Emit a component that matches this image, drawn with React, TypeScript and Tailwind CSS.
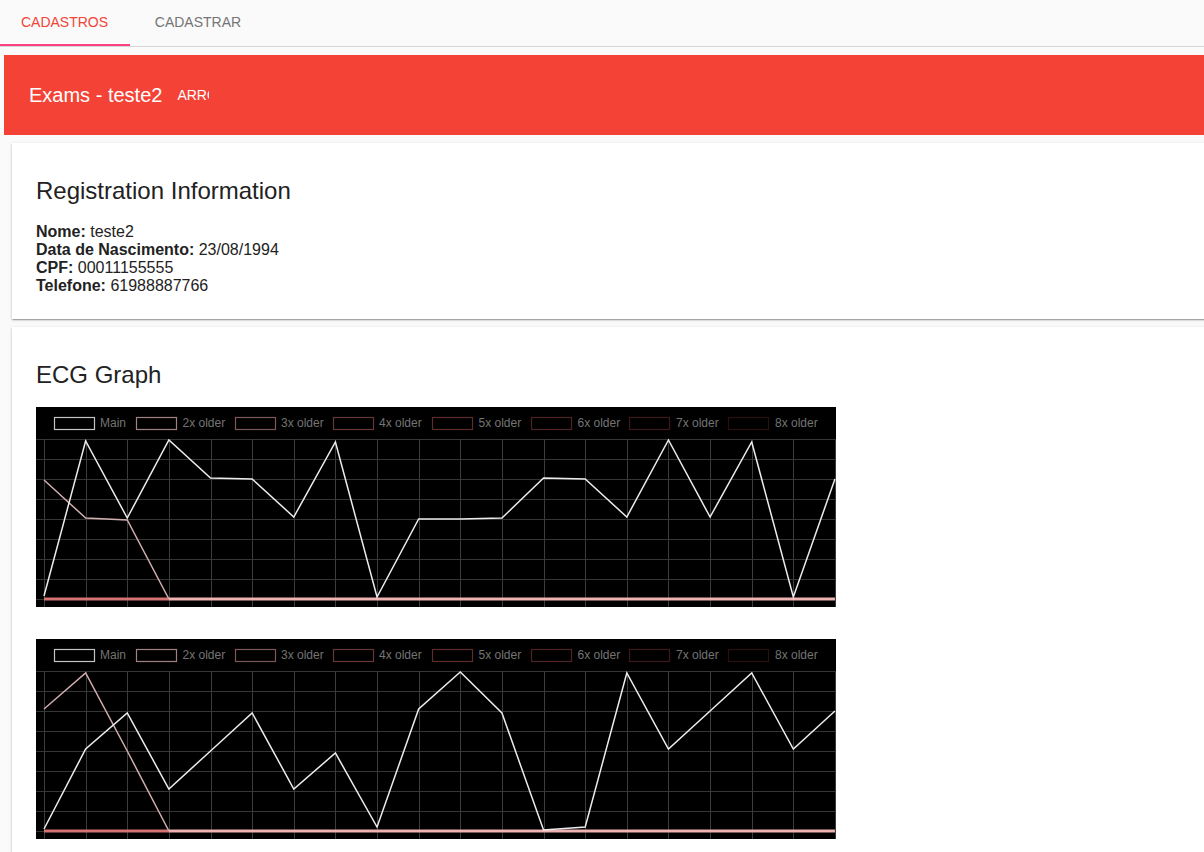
import React from "react";

type Series = { main: number[]; older: number[]; zeroAt: number };

const legend = [
  { label: "Main", box: 18, text: 64, color: "#c4c4c4" },
  { label: "2x older", box: 100, text: 146.5, color: "#a08080" },
  { label: "3x older", box: 199, text: 245, color: "#7e5858" },
  { label: "4x older", box: 297, text: 343, color: "#643838" },
  { label: "5x older", box: 396, text: 442.5, color: "#5e2c2c" },
  { label: "6x older", box: 495, text: 541.5, color: "#4e2222" },
  { label: "7x older", box: 593, text: 640, color: "#3c1818" },
  { label: "8x older", box: 692, text: 739, color: "#2c1010" },
];

const charts: Series[] = [
  {
    main: [189, 34, 111, 33, 71, 72, 110, 35, 190, 112, 112, 111, 71, 72, 110, 33, 110, 35, 190, 72],
    older: [73, 111, 113, 192],
    zeroAt: 3,
  },
  {
    main: [190, 110, 74, 150, 112, 74, 150, 114, 188, 70, 33, 74, 191, 188, 34, 110, 72, 34, 110, 72],
    older: [70, 34, 112, 192],
    zeroAt: 3,
  },
];

const px = (i: number) => 8 + i * 41.63;
const pts = (ys: number[]) => ys.map((y, i) => `${px(i)},${y}`).join(" ");

function EcgChart({ data }: { data: Series }) {
  return (
    <svg width={800} height={200} viewBox="0 0 800 200" className="block bg-black">
      {Array.from({ length: 9 }).map((_, j) => (
        <line key={"h" + j} x1={0} x2={800} y1={32.5 + j * 20} y2={32.5 + j * 20} stroke="#363636" strokeWidth={1} />
      ))}
      {Array.from({ length: 20 }).map((_, i) => (
        <line
          key={"v" + i}
          x1={Math.round(px(i)) + 0.5}
          x2={Math.round(px(i)) + 0.5}
          y1={32}
          y2={200}
          stroke="#3c3c3c"
          strokeWidth={1}
        />
      ))}
      {legend.map((l) => (
        <g key={l.label}>
          <rect x={l.box + 0.5} y={10.5} width={40} height={12} fill="#000" stroke={l.color} strokeWidth={1.2} />
          <text x={l.text} y={20} fontSize={12} fill="#747474" fontFamily="'Liberation Sans', Arial, sans-serif">
            {l.label}
          </text>
        </g>
      ))}
      {/* older series flatten onto the baseline */}
      <line x1={px(0)} x2={px(data.zeroAt)} y1={192} y2={192} stroke="#d57272" strokeWidth={3} />
      <line x1={px(data.zeroAt)} x2={px(19)} y1={192} y2={192} stroke="#efb2b2" strokeWidth={3} />
      <polyline points={pts(data.older)} fill="none" stroke="#d2aeae" strokeWidth={1.5} />
      <polyline points={pts(data.main)} fill="none" stroke="#ececec" strokeWidth={1.5} />
    </svg>
  );
}

const cardShadow =
  "bg-white shadow-[0_1px_3px_rgba(0,0,0,0.2),0_1px_1px_rgba(0,0,0,0.14),0_2px_1px_-1px_rgba(0,0,0,0.12)]";

export default function App() {
  return (
    <div className="min-h-screen w-full overflow-hidden bg-[#fafafa] font-['Liberation_Sans',Arial,sans-serif] text-[#222]">
      <div className="flex h-[47px] border-b border-[#d6d6d6] bg-[#fafafa] text-[14px]">
        <div className="flex h-[46px] w-[130px] items-center justify-center border-b-2 border-[#ff4081] pr-[1px] text-[#f44336]">
          CADASTROS
        </div>
        <div className="flex h-[46px] w-[136px] items-center justify-center border-b-2 border-transparent text-[#757575]">
          CADASTRAR
        </div>
      </div>

      <div className="w-[1240px]">
        <div className="ml-1 mt-2 flex h-20 items-center bg-[#f44336] pl-[25px] text-white">
          <span className="text-[20px]">Exams - teste2</span>
          <div className="ml-[15px] w-[32px] overflow-hidden whitespace-nowrap text-[14px] uppercase">Arrow</div>
        </div>

        <div className={`ml-3 mt-2 pb-[24px] pl-6 pt-[34px] ${cardShadow}`}>
          <h2 className="text-[24px] leading-[28px]">Registration Information</h2>
          <div className="mt-[18px] text-[16px] leading-[18px]">
            <div>
              <b>Nome:</b> teste2
            </div>
            <div>
              <b>Data de Nascimento:</b> 23/08/1994
            </div>
            <div>
              <b>CPF:</b> 00011155555
            </div>
            <div>
              <b>Telefone:</b> 61988887766
            </div>
          </div>
        </div>

        <div className={`ml-3 mt-2 pb-8 pl-6 pt-[34px] ${cardShadow}`}>
          <h2 className="text-[24px] leading-[28px]">ECG Graph</h2>
          <div className="mt-[18px] flex flex-col gap-8">
            {charts.map((c, i) => (
              <EcgChart key={i} data={c} />
            ))}
          </div>
        </div>
      </div>
    </div>
  );
}
